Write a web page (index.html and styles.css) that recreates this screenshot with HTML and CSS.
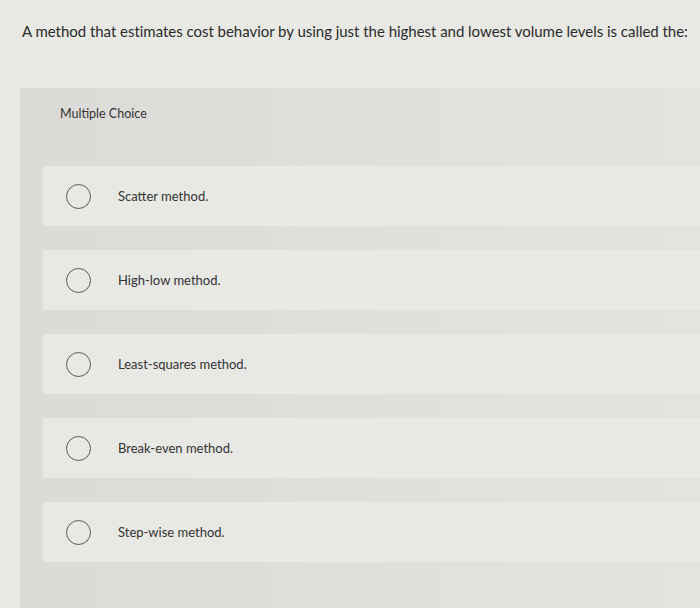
FILE: index.html
```html
<!DOCTYPE html>
<html>
<head>
<meta charset="utf-8">
<link rel="stylesheet" href="styles.css">
</head>
<body>
<div class="page">
  <p class="question">A method that estimates cost behavior by using just the highest and lowest volume levels is called the:</p>
  <section class="panel">
    <div class="panel-header">Multiple Choice</div>
    <ul class="options">
      <li class="option"><span class="radio"></span><span class="label">Scatter method.</span></li>
      <li class="option"><span class="radio"></span><span class="label">High-low method.</span></li>
      <li class="option"><span class="radio"></span><span class="label">Least-squares method.</span></li>
      <li class="option"><span class="radio"></span><span class="label">Break-even method.</span></li>
      <li class="option"><span class="radio"></span><span class="label">Step-wise method.</span></li>
    </ul>
  </section>
</div>
</body>
</html>
```

FILE: styles.css
```css
html, body {
  margin: 0;
  padding: 0;
  background: #e8e8e4;
  height: 100%;
  overflow: hidden;
}
.page {
  font-family: Lato, "Open Sans", "Liberation Sans", sans-serif;
  color: #2b2b2b;
  display: flex;
  flex-direction: column;
  height: 100%;
}
.question {
  margin: 0;
  padding: 21px 0 0 22px;
  font-size: 15px;
  letter-spacing: -0.03px;
  line-height: 20px;
  white-space: nowrap;
}
.panel {
  margin: 47px 0 0 20px;
  background: linear-gradient(90deg, #dbdad6 0%, #e0e0dc 60%, #e3e3df 100%);
  flex: 1;
}
.panel-header {
  height: 49px;
  display: flex;
  align-items: center;
  padding-left: 40px;
  padding-top: 2px;
  box-sizing: border-box;
  font-size: 12.5px;
  color: #333;
}
.options {
  list-style: none;
  margin: 29px 0 0 23px;
  padding: 0;
  display: flex;
  flex-direction: column;
  gap: 24px;
}
.option {
  height: 60px;
  background: #e8e8e4;
  display: flex;
  align-items: center;
  padding-left: 23px;
}
.radio {
  width: 23px;
  height: 23px;
  border: 1.5px solid #5a5a5a;
  border-radius: 50%;
  flex: none;
}
.label {
  margin-left: 27px;
  font-size: 13px;
  color: #333;
}
```
